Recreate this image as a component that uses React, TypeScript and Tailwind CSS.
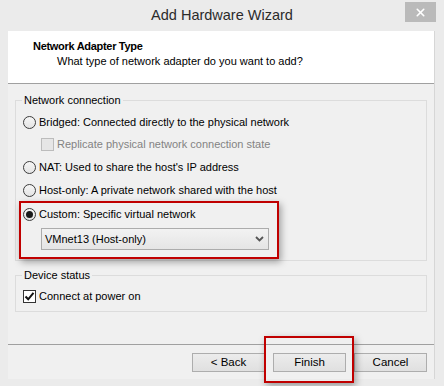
import { X } from "lucide-react";

function Radio({ checked = false }: { checked?: boolean }) {
  return (
    <span className="flex h-[13px] w-[13px] shrink-0 items-center justify-center rounded-full border border-[#3c3c3c] bg-gradient-to-b from-[#f6f6f6] to-[#e4e4e4]">
      {checked && <span className="h-[7px] w-[7px] rounded-full bg-[#1a1a1a]" />}
    </span>
  );
}

function Checkbox({ checked = false, disabled = false }: { checked?: boolean; disabled?: boolean }) {
  return (
    <span
      className={
        disabled
          ? "flex h-[13px] w-[13px] shrink-0 border border-[#bcbcbc] bg-[#e6e6e6]"
          : "flex h-[13px] w-[13px] shrink-0 items-center justify-center border border-[#333] bg-white"
      }
    >
      {checked && (
        <svg width="11" height="11" viewBox="0 0 11 11" aria-hidden="true">
          <path d="M1.5 5.5 L4.2 8.3 L9.5 1.8" fill="none" stroke="#111" strokeWidth="2" />
        </svg>
      )}
    </span>
  );
}

function Button({ label }: { label: string }) {
  return (
    <button className="flex h-[19px] w-[73px] items-center justify-center border border-[#adadad] bg-gradient-to-b from-[#ececec] to-[#e0e0e0] text-[11.5px] text-black">
      {label}
    </button>
  );
}

export default function App() {
  return (
    <div className="relative h-[386px] w-[444px] overflow-hidden bg-[#ebebeb] font-['Liberation_Sans',Arial,sans-serif] text-[11px] text-black">
      {/* title bar */}
      <div className="flex h-[31px] items-start">
        <div className="w-[39px]" />
        <div className="flex h-[31px] flex-1 items-center justify-center text-[14.5px] text-[#2b2b2b]">
          Add Hardware Wizard
        </div>
        <div className="w-[39px] pt-[2px]">
          <div className="flex h-[20px] w-[31px] items-center justify-center bg-[#bababa] text-white">
            <X size={13} strokeWidth={3} aria-hidden="true" />
          </div>
        </div>
      </div>

      {/* client area */}
      <div className="ml-[8px] flex h-[348px] w-[427px] flex-col border-r border-[#d6d6d6] bg-[#f0f0f0]">
        <div className="h-[53px] border-b border-[#a0a0a0] bg-white pt-[8px] leading-[15px]">
          <p className="pl-[25px] font-bold tracking-[-0.3px]">Network Adapter Type</p>
          <p className="pl-[49px]">What type of network adapter do you want to add?</p>
        </div>

        <div className="flex h-[260px] flex-col px-[7px] pt-[9px]">
          <fieldset className="border border-[#dcdcdc] pb-[10px]">
            <legend className="ml-[6px] px-[2px] leading-[15px]">Network connection</legend>
            <div className="flex flex-col pl-[7px] leading-[15px]">
              <div className="mt-[3px] flex h-[22px] items-center gap-[3px]">
                <Radio />
                <span>Bridged: Connected directly to the physical network</span>
              </div>
              <div className="flex h-[22px] items-center gap-[3px] pl-[18px] text-[#838383]">
                <Checkbox disabled />
                <span>Replicate physical network connection state</span>
              </div>
              <div className="mt-[1px] flex h-[22px] items-center gap-[3px]">
                <Radio />
                <span>NAT: Used to share the host's IP address</span>
              </div>
              <div className="mt-[1px] flex h-[22px] items-center gap-[3px]">
                <Radio />
                <span>Host-only: A private network shared with the host</span>
              </div>
              <div className="mt-[2px] flex h-[22px] items-center gap-[3px]">
                <Radio checked />
                <span>Custom: Specific virtual network</span>
              </div>
              <div className="ml-[18px] mt-[3px] flex h-[22px] w-[228px] items-center justify-between border border-[#acacac] bg-gradient-to-b from-[#f2f2f2] to-[#e5e5e5] pl-[3px] pr-[4px]">
                <span>VMnet13 (Host-only)</span>
                <svg width="9" height="6" viewBox="0 0 9 6" aria-hidden="true">
                  <path d="M1 1 L4.5 4.5 L8 1" fill="none" stroke="#555" strokeWidth="1.8" />
                </svg>
              </div>
            </div>
          </fieldset>

          <fieldset className="mt-[7px] border border-[#dcdcdc] pb-[4px]">
            <legend className="ml-[6px] px-[2px] leading-[15px]">Device status</legend>
            <div className="mt-[2px] flex h-[22px] items-center gap-[3px] pl-[7px]">
              <Checkbox checked />
              <span>Connect at power on</span>
            </div>
          </fieldset>
        </div>

        <div className="border-t border-[#a0a0a0]">
          <div className="flex justify-end gap-[8px] pr-[7px] pt-[8px]">
            <Button label="< Back" />
            <Button label="Finish" />
            <Button label="Cancel" />
          </div>
        </div>
      </div>

      {/* red annotation boxes */}
      <div className="absolute left-[19px] top-[201px] h-[58px] w-[260px] border-2 border-[#c00000] shadow-[2px_3px_7px_rgba(0,0,0,0.35)]" />
      <div className="absolute left-[264px] top-[336px] h-[47px] w-[90px] border-2 border-[#c00000] shadow-[2px_3px_7px_rgba(0,0,0,0.35)]" />
    </div>
  );
}
